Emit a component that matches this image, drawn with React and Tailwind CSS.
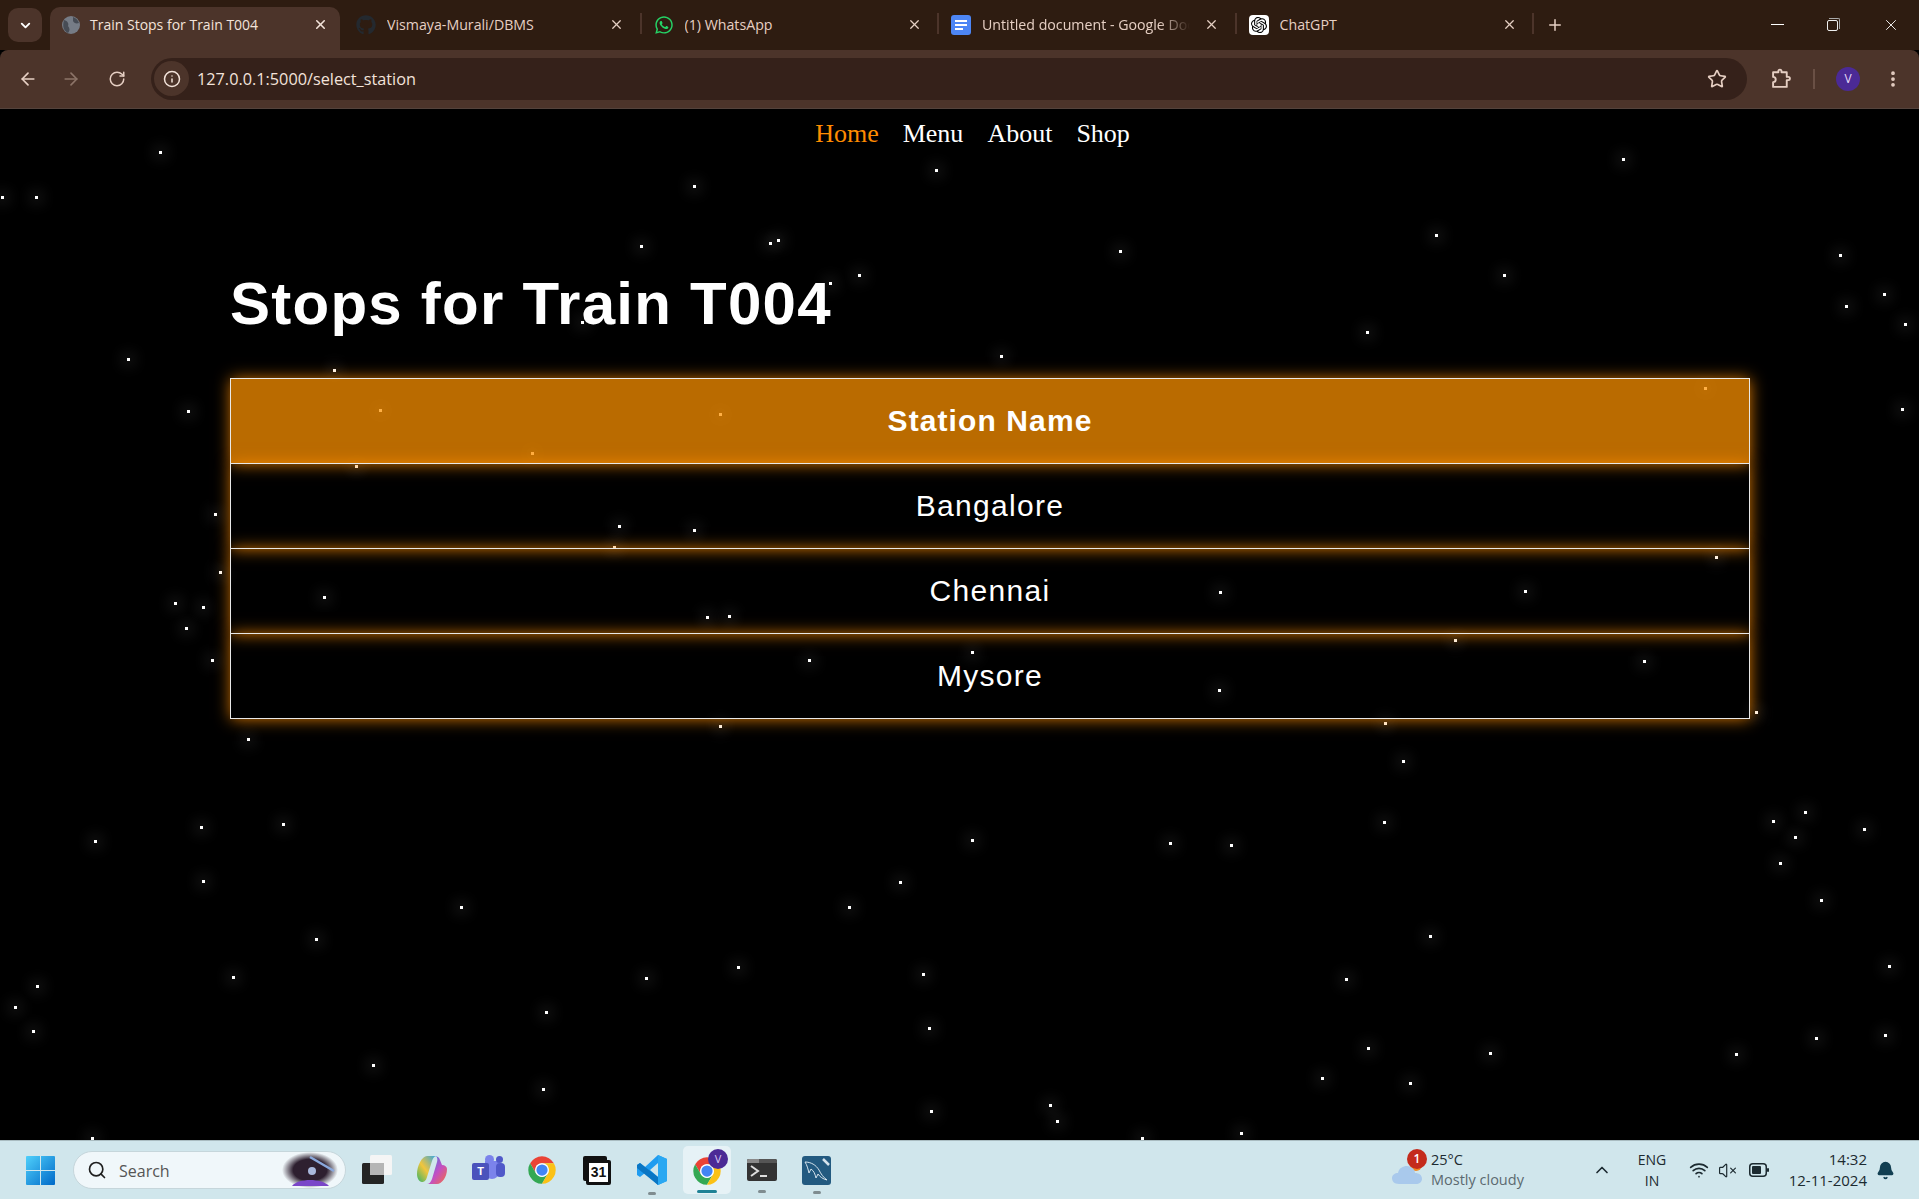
import { ArrowLeft, ArrowRight, RotateCw, Info, Star, MoreVertical, X, Plus, ChevronDown, Search, ChevronUp, Wifi, VolumeX, Bell } from "lucide-react";
import { FaGithub, FaWhatsapp } from "react-icons/fa";
import { SiOpenai } from "react-icons/si";

// star positions, measured off the reference: x, y in page pixels
const STARS = [
  [160, 152], [2, 197], [36, 197], [694, 186], [936, 170], [1623, 159], [641, 246], [770, 243], [778, 240], [1120, 251],
  [1436, 235], [1840, 255], [859, 275], [1504, 275], [1884, 294], [1846, 306], [1905, 324], [830, 283], [1367, 332], [128, 359],
  [334, 370], [1001, 356], [188, 411], [1902, 409], [380, 410], [720, 414], [532, 453], [1705, 388], [356, 466], [215, 514],
  [619, 526], [694, 530], [614, 547], [220, 572], [1716, 557], [175, 603], [203, 607], [324, 597], [1220, 592], [1525, 591],
  [186, 628], [707, 617], [729, 616], [1455, 640], [212, 660], [809, 660], [972, 652], [1644, 661], [1219, 690], [1756, 712],
  [720, 726], [1385, 723], [248, 739], [1403, 761], [1384, 822], [1773, 821], [1805, 812], [1864, 829], [1795, 837], [201, 827],
  [283, 824], [95, 841], [972, 840], [1170, 843], [1231, 845], [1780, 863], [203, 881], [900, 882], [1821, 900], [461, 907],
  [849, 907], [316, 939], [1430, 936], [738, 967], [233, 977], [646, 978], [923, 974], [1346, 979], [1889, 966], [37, 986],
  [15, 1007], [546, 1012], [33, 1031], [929, 1028], [1816, 1038], [1885, 1035], [1368, 1048], [1490, 1053], [1736, 1054], [373, 1065],
  [1322, 1078], [1410, 1083], [543, 1089], [1050, 1105], [1057, 1121], [931, 1111], [1241, 1133], [92, 1138], [1142, 1138], [582, 322],
];

const ChromeLogo = ({ size }) => (
  <svg width={size} height={size} viewBox="0 0 48 48">
    <path d="M24 13H43A22 22 0 0 0 5 13L14.5 29.5A11 11 0 0 1 24 13Z" fill="#ea4335" />
    <path d="M14.5 29.5L5 13A22 22 0 0 0 24 46L33.5 29.5A11 11 0 0 1 14.5 29.5Z" fill="#34a853" />
    <path d="M33.5 29.5L24 46A22 22 0 0 0 43 13H24A11 11 0 0 1 33.5 29.5Z" fill="#fbc116" />
    <circle cx="24" cy="24" r="11" fill="#fff" />
    <circle cx="24" cy="24" r="9" fill="#4285f4" />
  </svg>
);

const Tab = ({ icon, title, fade }) => (
  <div className="relative w-[297.5px] h-[43px] flex items-center pb-[8px] shrink-0">
    <div className="w-[20px] h-[20px] ml-[12px] flex items-center justify-center shrink-0">{icon}</div>
    <span className={`ml-[11px] overflow-hidden whitespace-nowrap text-[14.2px] text-[#e6cfc3] ${fade ? "w-[208px] [mask-image:linear-gradient(to_right,#000_85%,transparent)]" : "w-[218px]"}`}>{title}</span>
    <X size={15} strokeWidth={2} className="absolute left-[265px] top-[10px] text-[#e6cfc3]" />
    <div className="absolute right-0 top-[6px] w-[2px] h-[21px] bg-[#4c342a]" />
  </div>
);

const Taskbar = () => (
  <div className="h-[59px] shrink-0 bg-[#d0e6ec] border-t border-[#a9bcc1] flex items-center font-['Open_Sans',sans-serif] text-[#1c2a30]">
    {/* start button */}
    <svg width="29" height="29" viewBox="0 0 29 29" className="ml-[26px] shrink-0">
      <defs>
        <linearGradient id="win" x1="0" y1="0" x2="1" y2="1">
          <stop offset="0" stopColor="#4fd0fb" />
          <stop offset="1" stopColor="#0069c8" />
        </linearGradient>
      </defs>
      <path d="M1 0H14V14H0V1A1 1 0 0 1 1 0ZM15 0H28A1 1 0 0 1 29 1V14H15ZM0 15H14V29H1A1 1 0 0 1 0 28ZM15 15H29V28A1 1 0 0 1 28 29H15Z" fill="url(#win)" />
    </svg>
    {/* search box */}
    <div className="ml-[18px] w-[273px] h-[38px] rounded-full bg-[#f0f7fa] border border-[#c6d6db] flex items-center shrink-0">
      <Search size={20} strokeWidth={2} className="ml-[13px] text-[#1f1f1f]" />
      <span className="ml-[12px] mt-[2px] text-[16px] text-[#555]">Search</span>
      <svg width="56" height="36" viewBox="0 0 56 36" className="ml-auto mr-[7px]">
        <defs>
          <radialGradient id="space">
            <stop offset="0.6" stopColor="#2e2030" />
            <stop offset="1" stopColor="#2e2030" stopOpacity="0" />
          </radialGradient>
        </defs>
        <ellipse cx="28" cy="18" rx="28" ry="18" fill="url(#space)" />
        <path d="M28 5L52 19" stroke="#8aa8dc" strokeWidth="2.5" />
        <circle cx="30" cy="19" r="4" fill="#a9b8dc" />
        <path d="M10 34C16 26 40 26 47 34Z" fill="#7a46c8" />
      </svg>
    </div>
    {/* task view */}
    <svg width="30" height="30" viewBox="0 0 30 30" className="ml-[16px] shrink-0">
      <rect x="8" y="0" width="22" height="20" rx="1.5" fill="#f5f5f5" />
      <rect x="0" y="8" width="22" height="21" rx="1.5" fill="#242424" />
      <rect x="8" y="8" width="14" height="12" fill="#b5b5b5" />
    </svg>
    {/* copilot */}
    <svg width="30" height="30" viewBox="0 0 30 30" className="ml-[25px] shrink-0">
      <defs>
        <linearGradient id="cp1" x1="0" y1="1" x2="1" y2="0">
          <stop offset="0" stopColor="#35b36a" />
          <stop offset="0.45" stopColor="#f2c53c" />
          <stop offset="1" stopColor="#2aa5e8" />
        </linearGradient>
        <linearGradient id="cp2" x1="0" y1="0" x2="1" y2="1">
          <stop offset="0" stopColor="#2a7fe8" />
          <stop offset="0.55" stopColor="#c24fc4" />
          <stop offset="1" stopColor="#f5703c" />
        </linearGradient>
      </defs>
      <path d="M10 1H20C17 1 16 3 15 6L10 22C9 26 7 27 5 27C2 27 0 23 0 19C0 11 5 1 10 1Z" fill="url(#cp1)" />
      <path d="M18 1C20 1 22 2 23 5L25 10C28 10 30 12 30 14C30 22 25 29 20 29H10C12 29 14 27 15 24L20 7C21 4 20 1 18 1Z" fill="url(#cp2)" />
    </svg>
    {/* teams */}
    <div className="ml-[25px] w-[33px] h-[30px] relative shrink-0">
      <div className="absolute left-[13px] top-[6px] w-[14px] h-[18px] rounded-b-[7px] bg-[#7b83eb]" />
      <div className="absolute left-[24px] top-[8px] w-[9px] h-[14px] rounded-[4px] bg-[#5059c9]" />
      <div className="absolute left-[13px] top-0 w-[9px] h-[9px] rounded-full bg-[#7b83eb]" />
      <div className="absolute left-[24px] top-[1px] w-[7px] h-[7px] rounded-full bg-[#5059c9]" />
      <div className="absolute left-0 top-[8px] w-[17px] h-[17px] rounded-[2px] bg-[#4b53bc] flex items-center justify-center text-white text-[11px] font-bold font-['Liberation_Sans',sans-serif]">T</div>
    </div>
    {/* chrome */}
    <div className="ml-[22px] shrink-0"><ChromeLogo size={30} /></div>
    {/* calendar */}
    <div className="ml-[26px] w-[28px] h-[29px] relative shrink-0">
      <div className="absolute left-0 top-0 w-[24px] h-[25px] bg-[#111] rounded-[2px]" />
      <div className="absolute left-[3px] top-[4px] w-[25px] h-[25px] bg-white border-[3px] border-[#111] rounded-[2px] flex items-center justify-center text-[#111] text-[14px] font-bold font-['Liberation_Sans',sans-serif]">31</div>
    </div>
    {/* vs code */}
    <div className="ml-[26px] w-[30px] relative shrink-0">
      <svg width="30" height="30" viewBox="0 0 30 30">
        <path d="M21 0L30 4V26L21 30L8 18L3 22L0 20V10L3 8L8 12ZM21 8L13 15L21 22Z" fill="#1f9cf0" />
        <path d="M21 0L30 4V26L21 30Z" fill="#2aa8f2" />
        <path d="M3 8L21 22V30L0 13V10Z" fill="#0a76c4" />
      </svg>
      <div className="absolute left-[11px] top-[37px] w-[8px] h-[3px] rounded-full bg-[#7f8c90]" />
    </div>
    {/* active chrome */}
    <div className="ml-[16px] w-[48px] h-[48px] rounded-[5px] bg-[#e6f2f6] relative shrink-0">
      <div className="absolute left-[9px] top-[10px]"><ChromeLogo size={30} /></div>
      <div className="absolute left-[25px] top-[3px] w-[20px] h-[20px] rounded-full bg-[#4b2a96] flex items-center justify-center text-[#d8c8f5] text-[11px]">V</div>
      <div className="absolute left-[14px] top-[44px] w-[20px] h-[3px] rounded-full bg-[#1f8296]" />
    </div>
    {/* terminal */}
    <div className="ml-[16px] w-[30px] h-[22px] relative shrink-0 rounded-[2px] bg-[#333]">
      <div className="h-[4px] bg-[#555] rounded-t-[2px]">
        <div className="w-[12px] h-[4px] bg-[#8a8a8a] rounded-tl-[2px]" />
      </div>
      <svg width="30" height="18" viewBox="0 0 30 18" className="absolute left-0 top-[4px]">
        <path d="M4 3L11 8L4 13" stroke="#ddd" strokeWidth="2" fill="none" />
        <path d="M13 13H20" stroke="#ddd" strokeWidth="2" />
      </svg>
      <div className="absolute left-[11px] top-[31px] w-[8px] h-[3px] rounded-full bg-[#7f8c90]" />
    </div>
    {/* mysql workbench */}
    <div className="ml-[25px] w-[29px] h-[29px] rounded-[3px] bg-[#235a80] relative shrink-0">
      <svg width="29" height="29" viewBox="0 0 29 29" fill="none" stroke="#d5e3ec" strokeWidth="1">
        <path d="M3 6C9 6 14 9 17 14C19 18 21 21 25 24C21 23 18 21 16 18L14 22C13 18 12 15 9 13L7 17C6 13 5 9 3 6Z" />
        <path d="M21 3L27 9" strokeWidth="2.5" />
      </svg>
      <div className="absolute left-[11px] top-[35px] w-[8px] h-[3px] rounded-full bg-[#7f8c90]" />
    </div>

    {/* weather */}
    <div className="ml-[561px] w-[30px] h-[30px] relative shrink-0">
      <div className="absolute left-[18px] top-[4px] w-[12px] h-[12px] rounded-full bg-[#f08a24]" />
      <svg width="30" height="22" viewBox="0 0 30 22" className="absolute left-0 top-[9px]">
        <path d="M7 20C2 20 0 17 0 14C0 11 3 9 6 9C7 4 11 2 15 2C20 2 23 6 23 9C27 9 30 11 30 15C30 18 27 20 24 20Z" fill="#a9c9ec" />
      </svg>
      <div className="absolute left-[15px] top-[-6px] w-[20px] h-[20px] rounded-full bg-[#c42b1c] text-white text-[12px] font-semibold flex items-center justify-center">1</div>
    </div>
    <div className="ml-[9px] w-[150px] shrink-0 leading-[20px] text-[14.5px]">
      <div>25°C</div>
      <div className="text-[#5c6a70]">Mostly cloudy</div>
    </div>
    <ChevronUp size={20} strokeWidth={2} className="ml-[11px] shrink-0" />
    <div className="ml-[15px] w-[50px] text-center text-[14px] leading-[21px] shrink-0">
      <div>ENG</div>
      <div>IN</div>
    </div>
    <Wifi size={20} strokeWidth={2} className="ml-[12px] shrink-0" />
    <VolumeX size={19} strokeWidth={1.5} className="ml-[9px] shrink-0" />
    <svg width="20" height="14" viewBox="0 0 20 14" className="ml-[12px] shrink-0">
      <rect x="0.75" y="0.75" width="16.5" height="12.5" rx="3" fill="none" stroke="#1c2a30" strokeWidth="1.5" />
      <rect x="3" y="3" width="9" height="8" rx="1" fill="#1c2a30" />
      <rect x="18" y="5" width="2" height="4" rx="1" fill="#1c2a30" />
    </svg>
    <div className="ml-auto text-right text-[15px] leading-[21px] shrink-0">
      <div>14:32</div>
      <div>12-11-2024</div>
    </div>
    <Bell size={19} fill="#123f52" className="ml-[9px] mr-[24px] text-[#123f52] shrink-0" />
  </div>
);

export default function App() {
  return (
    <div className="w-full h-screen flex flex-col bg-black overflow-hidden font-['Open_Sans',sans-serif]">
      {/* tab strip */}
      <div className="h-[50px] shrink-0 bg-[#2e1c11] flex items-end relative">
        <div className="absolute left-[8px] top-[8px] w-[34px] h-[34px] rounded-[10px] bg-[#4c342a] flex items-center justify-center">
          <ChevronDown size={15} strokeWidth={3} className="text-white" />
        </div>
        <div className="ml-[50px] w-[290px] h-[43px] rounded-t-[10px] bg-[#4c342a] flex items-center pb-[8px] relative shrink-0">
          <svg width="20" height="20" viewBox="0 0 20 20" className="ml-[11px]">
            <circle cx="10" cy="10" r="9" fill="#767c86" />
            <path d="M3 5C7 6 8 9 7 11C9 13 9 16 7 18C3 16 1 12 3 5ZM12 2C15 3 17 5 18 8C15 9 13 8 12 6Z" fill="#474c55" />
          </svg>
          <span className="ml-[9px] text-[14px] text-[#f3e3da] whitespace-nowrap">Train Stops for Train T004</span>
          <X size={15} strokeWidth={2.5} className="absolute left-[263px] top-[10px] text-[#f3e3da]" />
        </div>
        <div className="ml-[4px] flex">
          <Tab icon={<FaGithub size={20} className="text-[#24292f]" />} title="Vismaya-Murali/DBMS" />
          <Tab icon={<FaWhatsapp size={20} className="text-[#25d366]" />} title="(1) WhatsApp" />
          <Tab
            icon={
              <div className="w-[20px] h-[20px] rounded-[3px] bg-[#4d86f5] flex flex-col justify-center gap-[2px] pl-[4px]">
                <div className="w-[12px] h-[2px] bg-white" />
                <div className="w-[12px] h-[2px] bg-white" />
                <div className="w-[8px] h-[2px] bg-white" />
              </div>
            }
            title="Untitled document - Google Docs"
            fade
          />
          <Tab
            icon={
              <div className="w-[20px] h-[20px] rounded-[4px] bg-white flex items-center justify-center">
                <SiOpenai size={16} className="text-black" />
              </div>
            }
            title="ChatGPT"
          />
        </div>
        <Plus size={18} strokeWidth={2} className="absolute left-[1546px] top-[16px] text-[#e6cfc3]" />
        {/* window buttons */}
        <div className="absolute left-[1771px] top-[24px] w-[13px] h-px bg-white" />
        <div className="absolute left-[1827px] top-[20px] w-[11px] h-[11px] border border-[#eee] rounded-[2px]">
          <div className="absolute left-[1px] top-[-3px] w-[11px] h-[11px] border-t border-r border-[#aaa] rounded-tr-[2px]" />
        </div>
        <X size={18} strokeWidth={1.2} className="absolute left-[1882px] top-[16px] text-white" />
      </div>

      {/* toolbar */}
      <div className="h-[59px] shrink-0 bg-[#4c342a] rounded-t-[8px] flex items-center pb-[1px] border-b border-[#54433c]">
        <ArrowLeft size={20} strokeWidth={2} className="ml-[18px] text-[#e6cfc3] shrink-0" />
        <ArrowRight size={20} strokeWidth={2} className="ml-[23px] text-[#8c7468] shrink-0" />
        <RotateCw size={18} strokeWidth={2} className="ml-[27px] text-[#e6cfc3] shrink-0" />
        <div className="ml-[25px] w-[1596px] h-[42px] rounded-full bg-[#35211a] flex items-center shrink-0">
          <div className="ml-[3px] w-[35px] h-[35px] rounded-full bg-[#4c342a] flex items-center justify-center">
            <Info size={18} strokeWidth={2} className="text-[#f3e3da]" />
          </div>
          <span className="ml-[8px] mt-[1px] text-[16.25px] text-[#f3e3da] whitespace-nowrap">127.0.0.1:5000/select_station</span>
          <Star size={20} strokeWidth={2} className="ml-auto mr-[20px] text-[#e6cfc3]" />
        </div>
        {/* extensions puzzle */}
        <svg width="21" height="21" viewBox="0 0 20 20" fill="none" stroke="#e6cfc3" strokeWidth="1.8" className="ml-[24px] shrink-0">
          <path d="M2 4H7V3A1.5 1.5 0 0 1 10 3V4H15V8.5H16.5A1.5 1.5 0 0 1 16.5 11.5H15V18H2V13.5A2.5 2.5 0 0 0 2 8.5Z" strokeLinejoin="round" />
        </svg>
        <div className="ml-[21px] w-[2px] h-[20px] bg-[#6a5045] shrink-0" />
        <div className="ml-[21px] w-[24px] h-[24px] rounded-full bg-[#4b2a96] flex items-center justify-center text-[12px] text-[#e6dcf8] shrink-0">V</div>
        <MoreVertical size={20} strokeWidth={2.5} className="ml-[23px] text-[#e6cfc3] shrink-0" />
      </div>

      {/* page */}
      <div className="flex-1 relative bg-black overflow-hidden">
        {STARS.map(([x, y], i) => (
          <div
            key={i}
            className="absolute w-[3px] h-[3px] bg-white shadow-[0_0_15px_3px_rgba(255,255,255,0.2)]"
            style={{ left: x - 1, top: y - 110 }}
          />
        ))}

        <nav className="relative flex justify-center gap-[24px] pl-[26px] pt-[5px] font-['Liberation_Serif',serif] text-[26px] leading-[40px] text-white">
          <a className="text-[#ff8c00]">Home</a>
          <a>Menu</a>
          <a>About</a>
          <a>Shop</a>
        </nav>

        <div className="relative ml-[230px] w-[1520px] font-['Liberation_Sans',sans-serif] text-white">
          <h1 className="mt-[114px] mb-[38px] text-[60px] leading-[72px] font-bold tracking-[1.25px]">Stops for Train T004</h1>
          <table className="w-full border-collapse text-center">
            <thead>
              <tr>
                <th className="h-[85px] pb-[2px] border border-[#e8e8e8] bg-[rgba(255,147,0,0.73)] shadow-[0_0_15px_rgba(255,140,0,0.85)] text-[30px] font-bold tracking-[1.1px]">Station Name</th>
              </tr>
            </thead>
            <tbody>
              {["Bangalore", "Chennai", "Mysore"].map((name) => (
                <tr key={name}>
                  <td className="h-[85px] pb-[2px] border border-[#e8e8e8] shadow-[0_0_15px_rgba(255,140,0,0.85)] text-[30px] tracking-[1.3px]">{name}</td>
                </tr>
              ))}
            </tbody>
          </table>
        </div>
      </div>

      <Taskbar />
    </div>
  );
}
